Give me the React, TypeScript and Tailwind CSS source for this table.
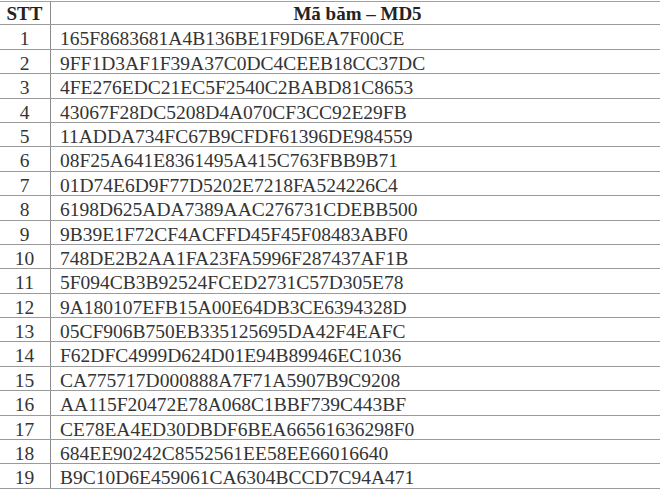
const hashes = [
  "165F8683681A4B136BE1F9D6EA7F00CE",
  "9FF1D3AF1F39A37C0DC4CEEB18CC37DC",
  "4FE276EDC21EC5F2540C2BABD81C8653",
  "43067F28DC5208D4A070CF3CC92E29FB",
  "11ADDA734FC67B9CFDF61396DE984559",
  "08F25A641E8361495A415C763FBB9B71",
  "01D74E6D9F77D5202E7218FA524226C4",
  "6198D625ADA7389AAC276731CDEBB500",
  "9B39E1F72CF4ACFFD45F45F08483ABF0",
  "748DE2B2AA1FA23FA5996F287437AF1B",
  "5F094CB3B92524FCED2731C57D305E78",
  "9A180107EFB15A00E64DB3CE6394328D",
  "05CF906B750EB335125695DA42F4EAFC",
  "F62DFC4999D624D01E94B89946EC1036",
  "CA775717D000888A7F71A5907B9C9208",
  "AA115F20472E78A068C1BBF739C443BF",
  "CE78EA4ED30DBDF6BEA66561636298F0",
  "684EE90242C8552561EE58EE66016640",
  "B9C10D6E459061CA6304BCCD7C94A471"
];

export default function App() {
  return (
    <div className="w-[660px] h-[492px] overflow-hidden bg-white pt-px font-['Liberation_Serif','Times_New_Roman',serif]">
      <div className="w-[664px] border-t border-[#a0a0a0]">
        <div className="flex h-[23.4px] border-b border-[#9a9a9a] text-[19px] leading-[19px] font-bold text-[#232323]">
          <div className="w-[51px] shrink-0 border-r border-[#8a8a8a] pt-[2px] text-center pr-px">
            STT
          </div>
          <div className="flex-1 pt-[2px] text-center">Mã băm – MD5</div>
        </div>
        {hashes.map((hash, i) => (
          <div
            key={hash}
            className="flex h-[24.4px] border-b border-[#9a9a9a] text-[19.5px] leading-[19px] text-[#343434]"
          >
            <div className="w-[51px] shrink-0 border-r border-[#8a8a8a] pt-[4px] text-center pr-px">
              {i + 1}
            </div>
            <div className="flex-1 pt-[4px] pl-[9px] whitespace-nowrap">
              {hash}
            </div>
          </div>
        ))}
      </div>
    </div>
  );
}
